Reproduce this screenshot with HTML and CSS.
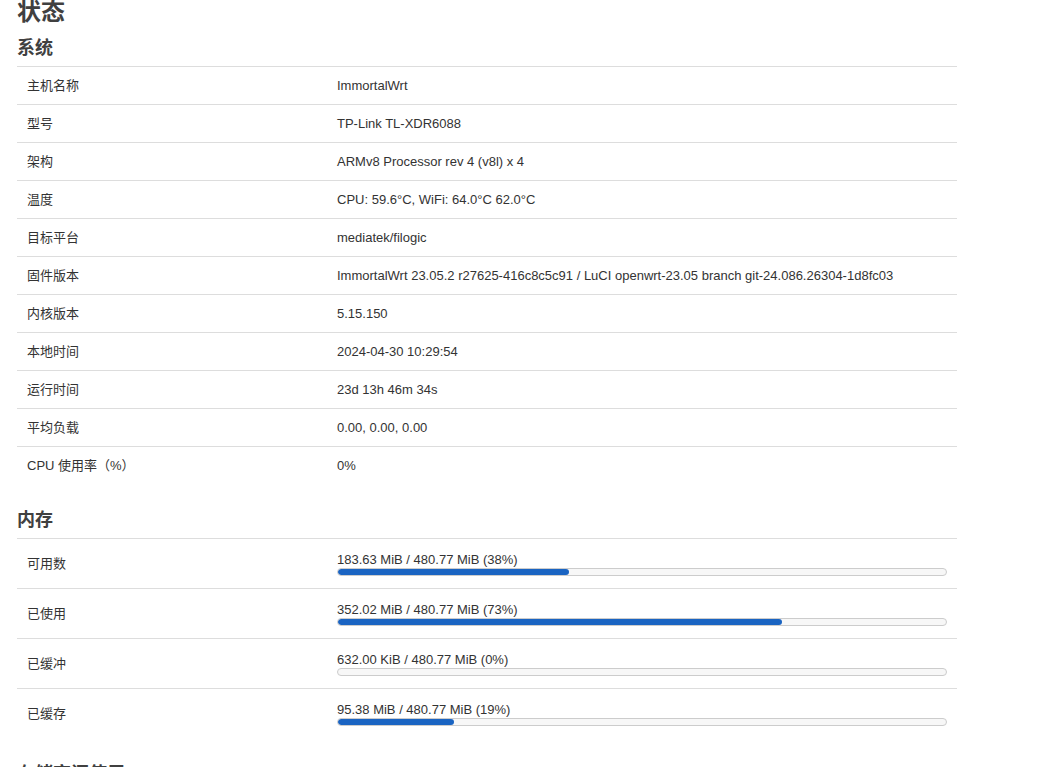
FILE: index.html
```html
<!DOCTYPE html>
<html lang="zh-CN">
<head>
  <meta charset="UTF-8">
  <meta name="viewport" content="width=device-width, initial-scale=1.0">
  <title>状态 - ImmortalWrt</title>
  <link rel="stylesheet" href="styles.css">
</head>
<body>
<div class="main">
  <h2 class="page-title">状态</h2>

  <div class="section">
    <h3>系统</h3>
    <table class="info-table">
      <colgroup><col class="col-label"><col></colgroup>
      <tr><td>主机名称</td><td>ImmortalWrt</td></tr>
      <tr><td>型号</td><td>TP-Link TL-XDR6088</td></tr>
      <tr><td>架构</td><td>ARMv8 Processor rev 4 (v8l) x 4</td></tr>
      <tr><td>温度</td><td>CPU: 59.6°C, WiFi: 64.0°C 62.0°C</td></tr>
      <tr><td>目标平台</td><td>mediatek/filogic</td></tr>
      <tr><td>固件版本</td><td>ImmortalWrt 23.05.2 r27625-416c8c5c91 / LuCI openwrt-23.05 branch git-24.086.26304-1d8fc03</td></tr>
      <tr><td>内核版本</td><td>5.15.150</td></tr>
      <tr><td>本地时间</td><td>2024-04-30 10:29:54</td></tr>
      <tr><td>运行时间</td><td>23d 13h 46m 34s</td></tr>
      <tr><td>平均负载</td><td>0.00, 0.00, 0.00</td></tr>
      <tr><td>CPU 使用率（%）</td><td>0%</td></tr>
    </table>
  </div>

  <div class="section">
    <h3>内存</h3>
    <table class="info-table mem-table">
      <colgroup><col class="col-label"><col></colgroup>
      <tr>
        <td>可用数</td>
        <td>
          <div class="bar-label">183.63 MiB / 480.77 MiB (38%)</div>
          <div class="bar"><div class="bar-fill" style="width: 38%"></div></div>
        </td>
      </tr>
      <tr>
        <td>已使用</td>
        <td>
          <div class="bar-label">352.02 MiB / 480.77 MiB (73%)</div>
          <div class="bar"><div class="bar-fill" style="width: 73%"></div></div>
        </td>
      </tr>
      <tr>
        <td>已缓冲</td>
        <td>
          <div class="bar-label">632.00 KiB / 480.77 MiB (0%)</div>
          <div class="bar"><div class="bar-fill" style="width: 0%"></div></div>
        </td>
      </tr>
      <tr>
        <td>已缓存</td>
        <td>
          <div class="bar-label">95.38 MiB / 480.77 MiB (19%)</div>
          <div class="bar"><div class="bar-fill" style="width: 19%"></div></div>
        </td>
      </tr>
    </table>
  </div>

  <div class="section">
    <h3>存储空间使用</h3>
  </div>
</div>
</body>
</html>
```

FILE: styles.css
```css
html, body {
  overflow: hidden;
}

body {
  margin: 0;
  background: #fff;
  color: #333;
  font-family: "Liberation Sans", Arial, "Noto Sans CJK SC", sans-serif;
  font-size: 13px;
}

.main {
  width: 940px;
  padding: 0 17px;
}

.page-title {
  margin: 0 0 14px;
  font-size: 24px;
  line-height: 24px;
  font-weight: bold;
  color: #404040;
}

.section h3 {
  margin: 0 0 8px;
  font-size: 18px;
  line-height: 20px;
  font-weight: bold;
  color: #404040;
}

.section {
  margin-bottom: 26px;
}

.info-table {
  width: 100%;
  border-collapse: collapse;
  table-layout: fixed;
}

.col-label {
  width: 310px;
}

.info-table td {
  padding: 10px;
  line-height: 17px;
  border-top: 1px solid #ddd;
  vertical-align: middle;
}

.mem-table td {
  padding: 12px 10px;
}

.bar-label {
  line-height: 17px;
}

.bar {
  height: 8px;
  box-sizing: border-box;
  border: 1px solid #ccc;
  border-radius: 4px;
  background: #f7f7f7;
  overflow: hidden;
}

.bar-fill {
  height: 100%;
  background: #1a64c2;
  border-radius: 3px;
}
```
